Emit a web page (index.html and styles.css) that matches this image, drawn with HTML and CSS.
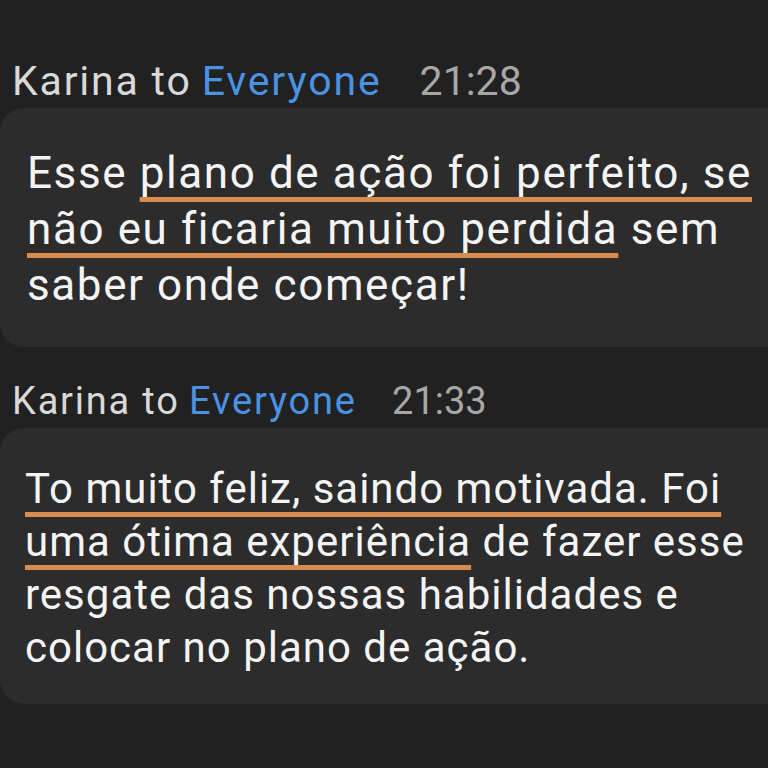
FILE: index.html
```html
<!DOCTYPE html>
<html lang="pt">
<head>
  <meta charset="UTF-8">
  <title>Chat</title>
  <link rel="stylesheet" href="styles.css">
</head>
<body>
<div class="chat">
  <div class="msg msg-first">
    <div class="msg-head">
      <span class="sender">Karina to</span>
      <span class="to">Everyone</span>
      <span class="time">21:28</span>
    </div>
    <div class="bubble">
      <p>Esse <span class="mark">plano de ação foi perfeito, se não eu ficaria muito perdida</span> sem saber onde começar!</p>
    </div>
  </div>
  <div class="msg msg-second">
    <div class="msg-head">
      <span class="sender">Karina to</span>
      <span class="to">Everyone</span>
      <span class="time">21:33</span>
    </div>
    <div class="bubble">
      <p><span class="mark">To muito feliz, saindo motivada. Foi uma ótima experiência</span> de fazer esse resgate das nossas habilidades e colocar no plano de ação.</p>
    </div>
  </div>
</div>
</body>
</html>
```

FILE: styles.css
```css
* {
  margin: 0;
  padding: 0;
}
html, body {
  height: 100%;
}
body {
  background-color: #212121;
  font-family: Roboto, "Liberation Sans", sans-serif;
  color: #f4f4f4;
  overflow: hidden;
}
.chat {
  padding-top: 58px;
}
.msg-head {
  padding-left: 12px;
  white-space: nowrap;
}
.sender {
  color: #d9d9d9;
  letter-spacing: 1.8px;
}
.to {
  color: #4a92e4;
  letter-spacing: 1.8px;
}
.time {
  color: #a7a7a7;
}
.bubble {
  background-color: #2c2c2c;
  border-radius: 24px 0 0 24px;
}
.bubble p {
  width: 735px;
  font-size: 42px;
  letter-spacing: 1px;
}
.mark {
  text-decoration: underline;
  text-decoration-color: #d98b4e;
  text-decoration-thickness: 5px;
  text-underline-offset: 9px;
  text-decoration-skip-ink: none;
}

/* first message */
.msg-first .msg-head {
  font-size: 41px;
  line-height: 46px;
}
.msg-first .time {
  margin-left: 28px;
}
.msg-first .bubble {
  margin-top: 4px;
  padding: 37px 0 34px 27px;
}
.msg-first p {
  font-size: 44px;
  letter-spacing: 1.6px;
  line-height: 56px;
}

/* second message */
.msg-second {
  margin-top: 33px;
}
.msg-second .msg-head {
  font-size: 38px;
  line-height: 42px;
}
.msg-second .time {
  margin-left: 26px;
}
.msg-second .bubble {
  margin-top: 6px;
  padding: 34px 0 30px 25px;
}
.msg-second p {
  line-height: 53px;
}
```
